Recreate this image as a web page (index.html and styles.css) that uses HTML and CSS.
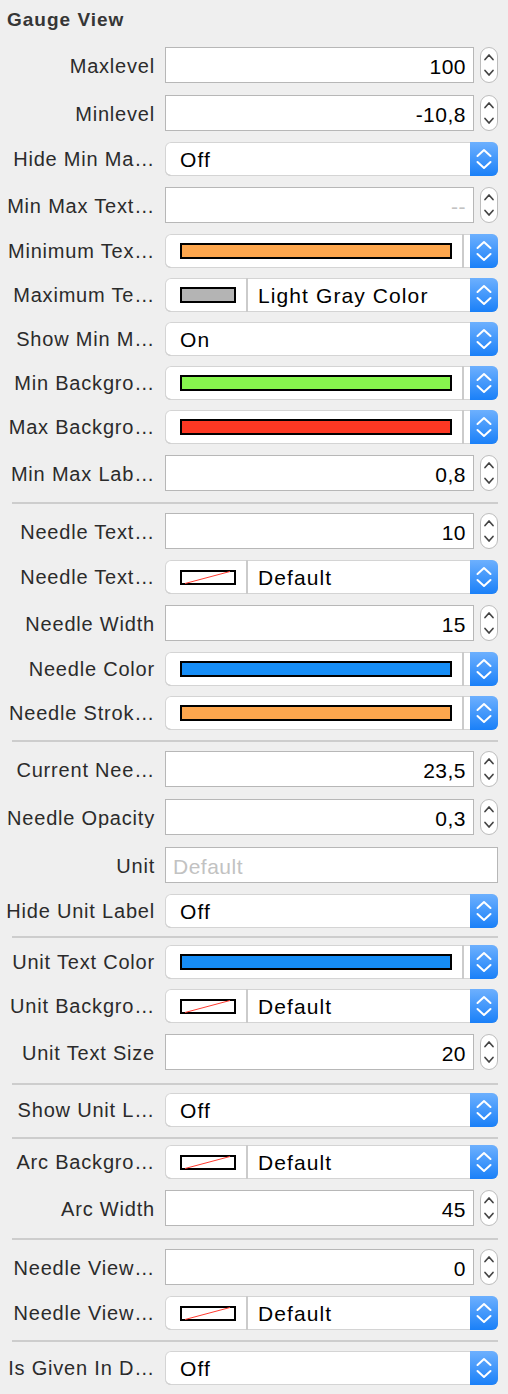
FILE: index.html
```html
<!DOCTYPE html>
<html>
<head>
<meta charset="utf-8">
<link rel="stylesheet" href="styles.css">
</head>
<body>
<div class="panel">
  <div class="title">Gauge View</div>

  <div class="row rf"><div class="lbl">Maxlevel</div><div class="ctl"><div class="field">100</div><svg class="step" viewBox="0 0 18 36"><rect x="0.5" y="0.5" width="17" height="35" rx="8.5"/><polyline points="5,12.5 9,8 13,12.5"/><polyline points="5,23.5 9,28 13,23.5"/></svg></div></div>
  <div class="row rf"><div class="lbl">Minlevel</div><div class="ctl"><div class="field">-10,8</div><svg class="step" viewBox="0 0 18 36"><rect x="0.5" y="0.5" width="17" height="35" rx="8.5"/><polyline points="5,12.5 9,8 13,12.5"/><polyline points="5,23.5 9,28 13,23.5"/></svg></div></div>
  <div class="row rp"><div class="lbl">Hide Min Ma…</div><div class="ctl"><div class="popup"><div class="ptext">Off</div><svg class="pbtn" viewBox="0 0 28 34"><polyline points="7.5,14 14,8 20.5,14"/><polyline points="7.5,20 14,26 20.5,20"/></svg></div></div></div>
  <div class="row rf"><div class="lbl">Min Max Text…</div><div class="ctl"><div class="field ph">--</div><svg class="step" viewBox="0 0 18 36"><rect x="0.5" y="0.5" width="17" height="35" rx="8.5"/><polyline points="5,12.5 9,8 13,12.5"/><polyline points="5,23.5 9,28 13,23.5"/></svg></div></div>
  <div class="row rp"><div class="lbl">Minimum Tex…</div><div class="ctl"><div class="popup"><div class="well full"><span class="sw orange"></span></div><div class="blank"></div><svg class="pbtn" viewBox="0 0 28 34"><polyline points="7.5,14 14,8 20.5,14"/><polyline points="7.5,20 14,26 20.5,20"/></svg></div></div></div>
  <div class="row rp"><div class="lbl">Maximum Te…</div><div class="ctl"><div class="popup"><div class="well"><span class="sw gray"></span></div><div class="ptext split">Light Gray Color</div><svg class="pbtn" viewBox="0 0 28 34"><polyline points="7.5,14 14,8 20.5,14"/><polyline points="7.5,20 14,26 20.5,20"/></svg></div></div></div>
  <div class="row rp"><div class="lbl">Show Min M…</div><div class="ctl"><div class="popup"><div class="ptext">On</div><svg class="pbtn" viewBox="0 0 28 34"><polyline points="7.5,14 14,8 20.5,14"/><polyline points="7.5,20 14,26 20.5,20"/></svg></div></div></div>
  <div class="row rp"><div class="lbl">Min Backgro…</div><div class="ctl"><div class="popup"><div class="well full"><span class="sw green"></span></div><div class="blank"></div><svg class="pbtn" viewBox="0 0 28 34"><polyline points="7.5,14 14,8 20.5,14"/><polyline points="7.5,20 14,26 20.5,20"/></svg></div></div></div>
  <div class="row rp"><div class="lbl">Max Backgro…</div><div class="ctl"><div class="popup"><div class="well full"><span class="sw red"></span></div><div class="blank"></div><svg class="pbtn" viewBox="0 0 28 34"><polyline points="7.5,14 14,8 20.5,14"/><polyline points="7.5,20 14,26 20.5,20"/></svg></div></div></div>
  <div class="row rf"><div class="lbl">Min Max Lab…</div><div class="ctl"><div class="field">0,8</div><svg class="step" viewBox="0 0 18 36"><rect x="0.5" y="0.5" width="17" height="35" rx="8.5"/><polyline points="5,12.5 9,8 13,12.5"/><polyline points="5,23.5 9,28 13,23.5"/></svg></div></div>

  <div class="sep s1"></div>

  <div class="row rf"><div class="lbl">Needle Text…</div><div class="ctl"><div class="field">10</div><svg class="step" viewBox="0 0 18 36"><rect x="0.5" y="0.5" width="17" height="35" rx="8.5"/><polyline points="5,12.5 9,8 13,12.5"/><polyline points="5,23.5 9,28 13,23.5"/></svg></div></div>
  <div class="row rp"><div class="lbl">Needle Text…</div><div class="ctl"><div class="popup"><div class="well"><svg class="sw none" viewBox="0 0 56 15"><rect x="1" y="1" width="54" height="13"/><line x1="5" y1="13.5" x2="50" y2="1.5"/></svg></div><div class="ptext split">Default</div><svg class="pbtn" viewBox="0 0 28 34"><polyline points="7.5,14 14,8 20.5,14"/><polyline points="7.5,20 14,26 20.5,20"/></svg></div></div></div>
  <div class="row rf"><div class="lbl">Needle Width</div><div class="ctl"><div class="field">15</div><svg class="step" viewBox="0 0 18 36"><rect x="0.5" y="0.5" width="17" height="35" rx="8.5"/><polyline points="5,12.5 9,8 13,12.5"/><polyline points="5,23.5 9,28 13,23.5"/></svg></div></div>
  <div class="row rp"><div class="lbl">Needle Color</div><div class="ctl"><div class="popup"><div class="well full"><span class="sw blue"></span></div><div class="blank"></div><svg class="pbtn" viewBox="0 0 28 34"><polyline points="7.5,14 14,8 20.5,14"/><polyline points="7.5,20 14,26 20.5,20"/></svg></div></div></div>
  <div class="row rp"><div class="lbl">Needle Strok…</div><div class="ctl"><div class="popup"><div class="well full"><span class="sw orange"></span></div><div class="blank"></div><svg class="pbtn" viewBox="0 0 28 34"><polyline points="7.5,14 14,8 20.5,14"/><polyline points="7.5,20 14,26 20.5,20"/></svg></div></div></div>

  <div class="sep s2"></div>

  <div class="row rf"><div class="lbl">Current Nee…</div><div class="ctl"><div class="field">23,5</div><svg class="step" viewBox="0 0 18 36"><rect x="0.5" y="0.5" width="17" height="35" rx="8.5"/><polyline points="5,12.5 9,8 13,12.5"/><polyline points="5,23.5 9,28 13,23.5"/></svg></div></div>
  <div class="row rf"><div class="lbl">Needle Opacity</div><div class="ctl"><div class="field">0,3</div><svg class="step" viewBox="0 0 18 36"><rect x="0.5" y="0.5" width="17" height="35" rx="8.5"/><polyline points="5,12.5 9,8 13,12.5"/><polyline points="5,23.5 9,28 13,23.5"/></svg></div></div>
  <div class="row rf"><div class="lbl">Unit</div><div class="ctl"><div class="field left ph">Default</div></div></div>
  <div class="row rp"><div class="lbl">Hide Unit Label</div><div class="ctl"><div class="popup"><div class="ptext">Off</div><svg class="pbtn" viewBox="0 0 28 34"><polyline points="7.5,14 14,8 20.5,14"/><polyline points="7.5,20 14,26 20.5,20"/></svg></div></div></div>

  <div class="sep s3"></div>

  <div class="row rp"><div class="lbl">Unit Text Color</div><div class="ctl"><div class="popup"><div class="well full"><span class="sw blue"></span></div><div class="blank"></div><svg class="pbtn" viewBox="0 0 28 34"><polyline points="7.5,14 14,8 20.5,14"/><polyline points="7.5,20 14,26 20.5,20"/></svg></div></div></div>
  <div class="row rp"><div class="lbl">Unit Backgro…</div><div class="ctl"><div class="popup"><div class="well"><svg class="sw none" viewBox="0 0 56 15"><rect x="1" y="1" width="54" height="13"/><line x1="5" y1="13.5" x2="50" y2="1.5"/></svg></div><div class="ptext split">Default</div><svg class="pbtn" viewBox="0 0 28 34"><polyline points="7.5,14 14,8 20.5,14"/><polyline points="7.5,20 14,26 20.5,20"/></svg></div></div></div>
  <div class="row rf"><div class="lbl">Unit Text Size</div><div class="ctl"><div class="field">20</div><svg class="step" viewBox="0 0 18 36"><rect x="0.5" y="0.5" width="17" height="35" rx="8.5"/><polyline points="5,12.5 9,8 13,12.5"/><polyline points="5,23.5 9,28 13,23.5"/></svg></div></div>

  <div class="sep s4"></div>

  <div class="row rp"><div class="lbl">Show Unit L…</div><div class="ctl"><div class="popup"><div class="ptext">Off</div><svg class="pbtn" viewBox="0 0 28 34"><polyline points="7.5,14 14,8 20.5,14"/><polyline points="7.5,20 14,26 20.5,20"/></svg></div></div></div>

  <div class="sep s5"></div>

  <div class="row rp"><div class="lbl">Arc Backgro…</div><div class="ctl"><div class="popup"><div class="well"><svg class="sw none" viewBox="0 0 56 15"><rect x="1" y="1" width="54" height="13"/><line x1="5" y1="13.5" x2="50" y2="1.5"/></svg></div><div class="ptext split">Default</div><svg class="pbtn" viewBox="0 0 28 34"><polyline points="7.5,14 14,8 20.5,14"/><polyline points="7.5,20 14,26 20.5,20"/></svg></div></div></div>
  <div class="row rf"><div class="lbl">Arc Width</div><div class="ctl"><div class="field">45</div><svg class="step" viewBox="0 0 18 36"><rect x="0.5" y="0.5" width="17" height="35" rx="8.5"/><polyline points="5,12.5 9,8 13,12.5"/><polyline points="5,23.5 9,28 13,23.5"/></svg></div></div>

  <div class="sep s6"></div>

  <div class="row rf"><div class="lbl">Needle View…</div><div class="ctl"><div class="field">0</div><svg class="step" viewBox="0 0 18 36"><rect x="0.5" y="0.5" width="17" height="35" rx="8.5"/><polyline points="5,12.5 9,8 13,12.5"/><polyline points="5,23.5 9,28 13,23.5"/></svg></div></div>
  <div class="row rp"><div class="lbl">Needle View…</div><div class="ctl"><div class="popup"><div class="well"><svg class="sw none" viewBox="0 0 56 15"><rect x="1" y="1" width="54" height="13"/><line x1="5" y1="13.5" x2="50" y2="1.5"/></svg></div><div class="ptext split">Default</div><svg class="pbtn" viewBox="0 0 28 34"><polyline points="7.5,14 14,8 20.5,14"/><polyline points="7.5,20 14,26 20.5,20"/></svg></div></div></div>

  <div class="sep s7"></div>

  <div class="row rp"><div class="lbl">Is Given In D…</div><div class="ctl"><div class="popup"><div class="ptext">Off</div><svg class="pbtn" viewBox="0 0 28 34"><polyline points="7.5,14 14,8 20.5,14"/><polyline points="7.5,20 14,26 20.5,20"/></svg></div></div></div>
</div>
</body>
</html>
```

FILE: styles.css
```css
html, body {
  margin: 0;
  padding: 0;
  background: #efefef;
}
body {
  width: 508px;
  font-family: "Liberation Sans", Arial, sans-serif;
  color: #2b2b2b;
}
.panel {
  padding-right: 10px;
}
.title {
  box-sizing: border-box;
  height: 41px;
  padding: 10px 0 0 7px;
  font-size: 19px;
  line-height: 19px;
  font-weight: bold;
  letter-spacing: 1px;
  color: #363636;
}
.row {
  display: grid;
  grid-template-columns: 155px 333px;
  column-gap: 10px;
  align-items: center;
}
.row.rf { height: 48px; }
.row.rp { height: 44px; }
.lbl {
  text-align: right;
  white-space: nowrap;
  overflow: hidden;
  font-size: 20px;
  line-height: 20px;
  letter-spacing: 0.8px;
  color: #2b2b2b;
}
.rf .lbl { padding-top: 2px; }
.rp .lbl { padding-top: 0; padding-bottom: 1px; }
.ctl {
  display: flex;
  align-items: center;
  gap: 6px;
}
.field {
  flex: 1;
  box-sizing: border-box;
  height: 36px;
  background: #fff;
  border: 1px solid #b7b7b7;
  display: flex;
  align-items: center;
  justify-content: flex-end;
  padding: 3px 7px 0 7px;
  font-size: 21px;
  letter-spacing: 0.5px;
  color: #000;
  white-space: nowrap;
}
.field.left { justify-content: flex-start; }
.field.ph { color: #c2c2c2; }
.step {
  width: 18px;
  height: 36px;
  flex: none;
}
.step rect {
  fill: #fff;
  stroke: #bcbcbc;
  stroke-width: 1;
}
.step polyline {
  fill: none;
  stroke: #444;
  stroke-width: 1.7;
  stroke-linecap: round;
  stroke-linejoin: round;
}
.popup {
  flex: 1;
  height: 34px;
  display: flex;
  align-items: stretch;
  background: #fff;
  border-radius: 6px;
  overflow: hidden;
  box-shadow: inset 0 0 0 1px #d4d4d4, inset 0 -1px 0 #b9b9b9;
}
.ptext {
  flex: 1;
  display: flex;
  align-items: center;
  padding: 2px 0 0 15px;
  font-size: 21px;
  letter-spacing: 1.1px;
  color: #000;
  white-space: nowrap;
}
.ptext.split { padding-left: 10px; }
.pbtn {
  width: 28px;
  height: 34px;
  flex: none;
  background: linear-gradient(#6db0fe, #1a80f8);
}
.pbtn polyline {
  fill: none;
  stroke: #fff;
  stroke-width: 2;
  stroke-linecap: round;
  stroke-linejoin: round;
}
.well {
  display: flex;
  align-items: center;
  padding: 0 10px 0 15px;
  border-right: 2px solid #cbcbcb;
}
.well.full { flex: 1; }
.blank { width: 6px; flex: none; }
.sw {
  display: block;
  box-sizing: border-box;
  height: 16px;
  width: 56px;
  border: 2px solid #000;
}
.well.full .sw { flex: 1; width: auto; }
.sw.orange { background: #fda64d; }
.sw.green { background: #87f64d; }
.sw.red { background: #fc3823; }
.sw.blue { background: #168df6; }
.sw.gray { background: #b4b4b4; }
svg.sw.none {
  border: none;
  height: 15px;
}
.sw.none rect {
  fill: #fff;
  stroke: #000;
  stroke-width: 2;
}
.sw.none line {
  stroke: #ff3b30;
  stroke-width: 1;
}
.sep {
  height: 2px;
  margin-left: 12px;
  background: #cdcdcd;
}
.s1 { margin-top: 5px; margin-bottom: 3px; }
.s2 { margin-top: 5px; margin-bottom: 3px; }
.s3 { margin-top: 3px; margin-bottom: 2px; }
.s4 { margin-top: 7px; margin-bottom: 3px; }
.s5 { margin-top: 5px; margin-bottom: 1px; }
.s6 { margin-top: 6px; margin-bottom: 3px; }
.s7 { margin-top: 5px; margin-bottom: 4px; }
```
